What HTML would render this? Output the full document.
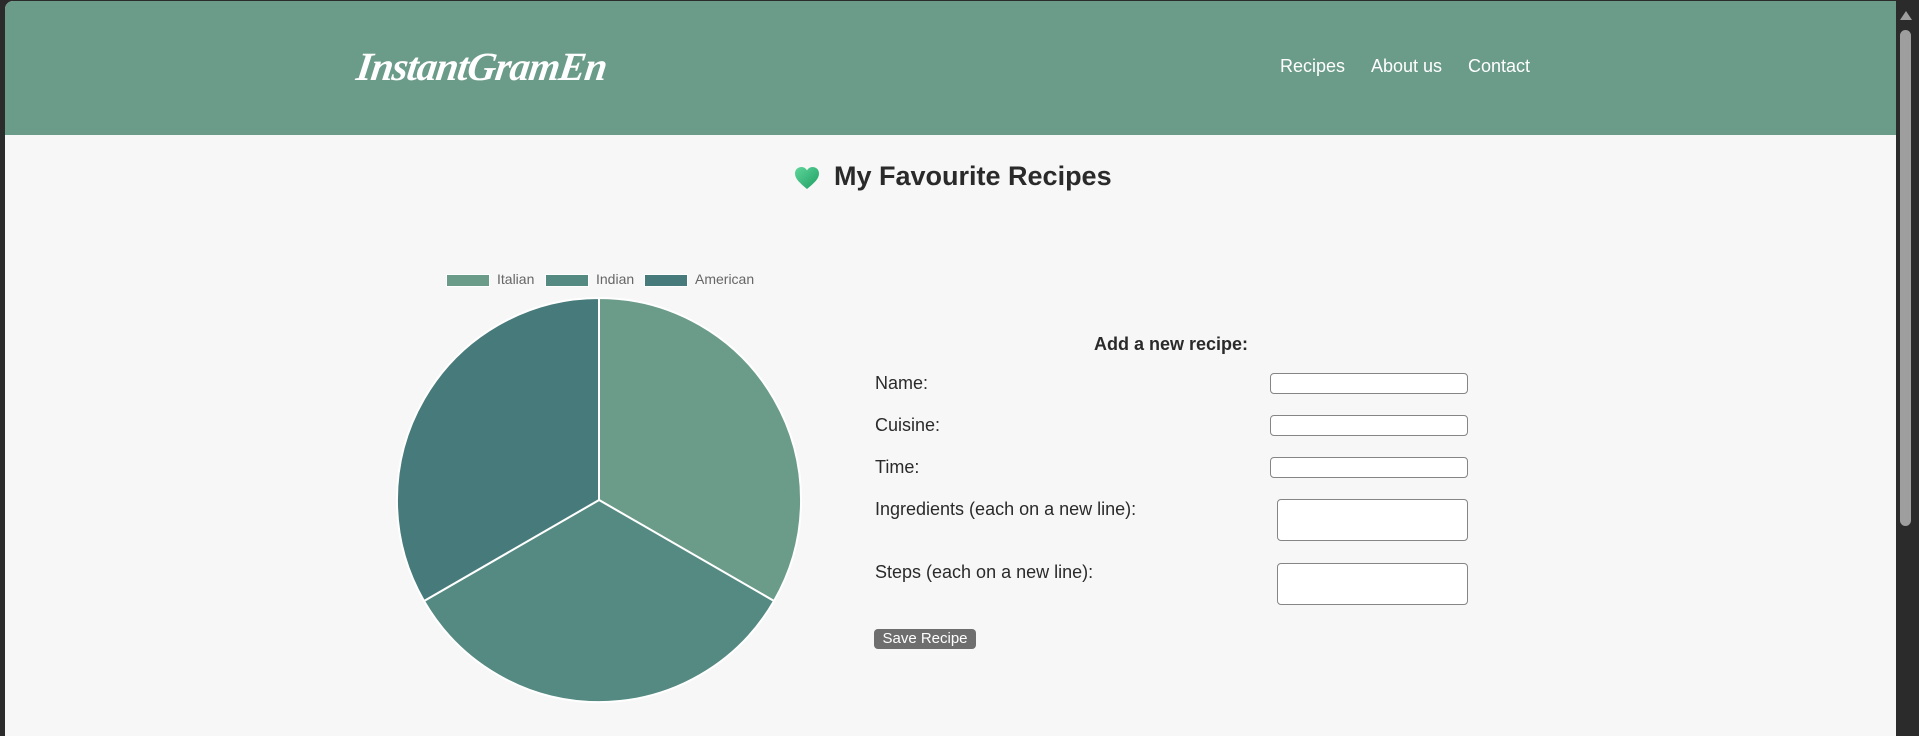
<!DOCTYPE html>
<html><head><meta charset="utf-8"><style>
*{margin:0;padding:0;box-sizing:border-box}
body{width:1919px;height:736px;background:#2b2b2b;position:relative;overflow:hidden;font-family:"Liberation Sans",sans-serif;color:#222}
.page{position:absolute;left:5px;top:1px;width:1891px;height:735px;background:#f7f7f7;border-top-left-radius:8px;overflow:hidden}
.hdr{position:absolute;left:0;top:0;width:1891px;height:134px;background:#6b9c89}
.logo{position:absolute;left:352px;top:42px;font-family:"Liberation Serif",serif;font-style:italic;font-weight:bold;font-size:40px;color:#fff;letter-spacing:-1px;transform:skewX(-8deg)}
.nav{position:absolute;top:55px;font-size:18px;color:#fff}
h1{position:absolute;left:829px;top:160px;font-size:27px;font-weight:bold;color:#2a2a2a}
.heart{position:absolute;left:789px;top:165px}
.leg{position:absolute;top:273px;width:44px;height:13px;border:1px solid #fff}
.lt{position:absolute;top:270px;font-size:14px;color:#666}
.lbl{position:absolute;left:870px;font-size:18px;color:#2a2a2a}
.in{position:absolute;left:1265px;width:198px;height:21px;background:#fff;border:1px solid #858585;border-radius:4px}
.ta{position:absolute;left:1272px;width:191px;height:42px;background:#fff;border:1px solid #858585;border-radius:4px}
.btn{position:absolute;left:869px;top:628px;width:102px;height:20px;background:#6e6e6e;color:#fff;border-radius:4px;font-size:15px;text-align:center;line-height:20px}
</style></head><body>
<div class="page">
<div class="hdr">
<div class="logo">InstantGramEn</div>
<div class="nav" style="left:1275px">Recipes</div>
<div class="nav" style="left:1366px">About us</div>
<div class="nav" style="left:1463px">Contact</div>
</div>
<svg class="heart" width="26" height="24" viewBox="0 0 26 24"><defs><linearGradient id="g" x1="0" y1="0" x2="1" y2="1"><stop offset="0" stop-color="#5fd69a"/><stop offset="1" stop-color="#1f9e63"/></linearGradient></defs><path d="M13 23C6 17 1 13 1 7.5 1 3.5 4 1 7.5 1 10 1 12 2.5 13 4.5 14 2.5 16 1 18.5 1 22 1 25 3.5 25 7.5 25 13 20 17 13 23Z" fill="url(#g)"/></svg>
<h1>My Favourite Recipes</h1>
<div class="leg" style="left:441px;background:#6b9c89"></div><div class="lt" style="left:492px">Italian</div>
<div class="leg" style="left:540px;background:#548a82"></div><div class="lt" style="left:591px">Indian</div>
<div class="leg" style="left:639px;background:#477a7b"></div><div class="lt" style="left:690px">American</div>
<svg style="position:absolute;left:0;top:0" width="1000" height="735">
<g stroke="#fff" stroke-width="2">
<path d="M594 499 L594 297 A202 202 0 0 1 769 600 Z" fill="#6b9c89"/>
<path d="M594 499 L769 600 A202 202 0 0 1 419 600 Z" fill="#548a82"/>
<path d="M594 499 L419 600 A202 202 0 0 1 594 297 Z" fill="#477a7b"/>
</g></svg>
<div style="position:absolute;left:1066px;top:333px;width:200px;text-align:center;font-weight:bold;font-size:18px;color:#2a2a2a">Add a new recipe:</div>
<div class="lbl" style="top:372px">Name:</div>
<div class="lbl" style="top:414px">Cuisine:</div>
<div class="lbl" style="top:456px">Time:</div>
<div class="lbl" style="top:498px">Ingredients (each on a new line):</div>
<div class="lbl" style="top:561px">Steps (each on a new line):</div>
<div class="in" style="top:372px"></div>
<div class="in" style="top:414px"></div>
<div class="in" style="top:456px"></div>
<div class="ta" style="top:498px"></div>
<div class="ta" style="top:562px"></div>
<div class="btn">Save Recipe</div>
</div>
<div style="position:absolute;left:1900px;top:30px;width:11px;height:496px;background:#9e9e9e;border-radius:6px"></div>
<div style="position:absolute;left:1900px;top:11px;width:0;height:0;border-left:6px solid transparent;border-right:6px solid transparent;border-bottom:9px solid #9e9e9e"></div>
</body></html>
